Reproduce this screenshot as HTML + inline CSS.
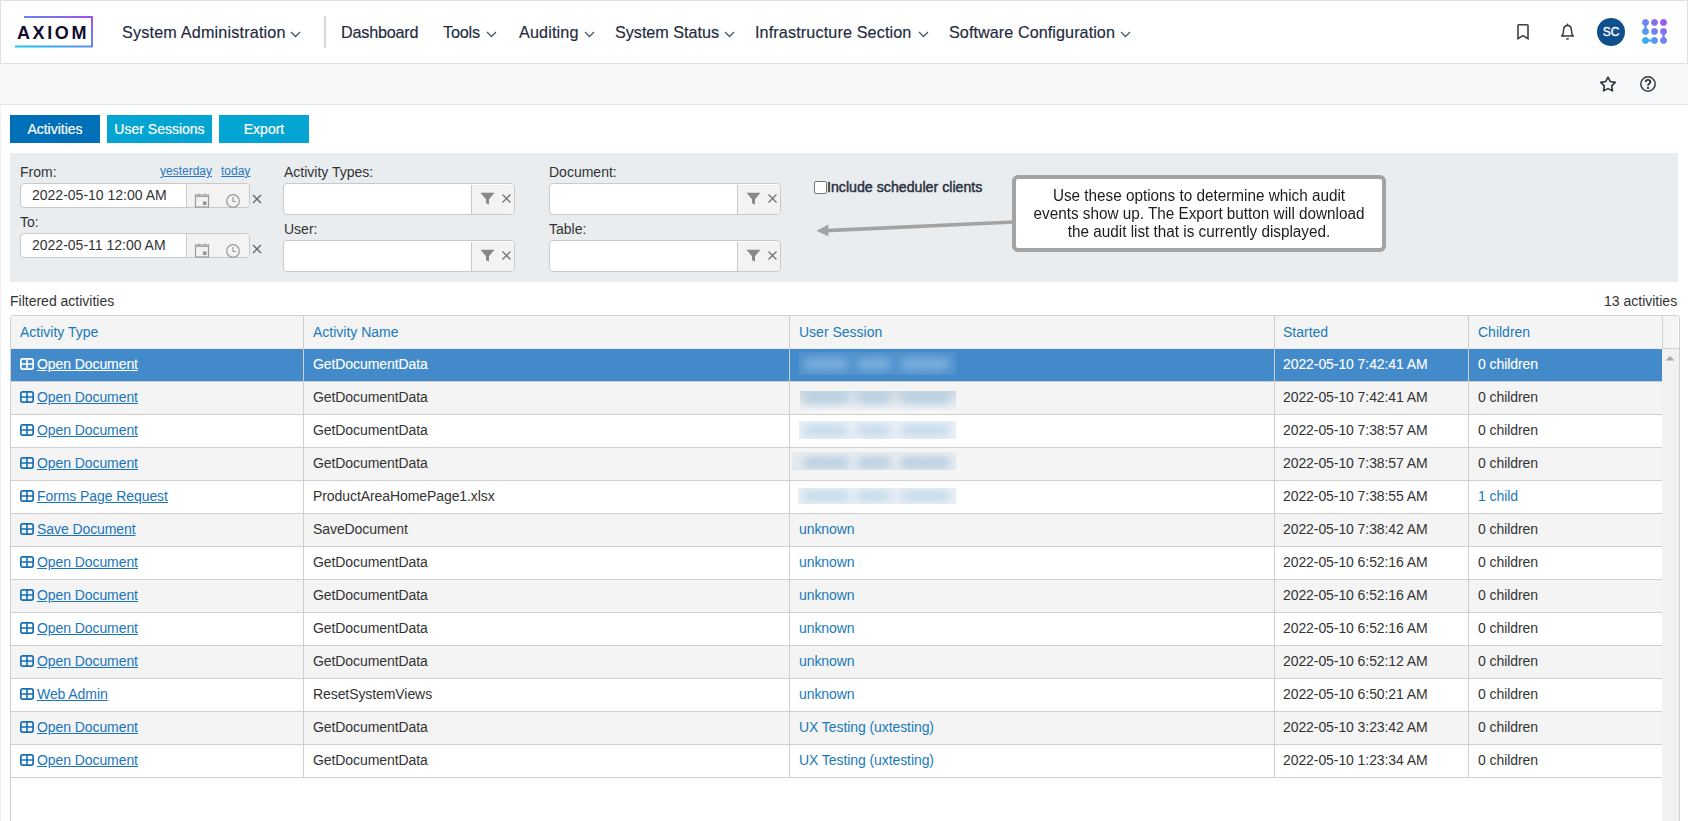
<!DOCTYPE html>
<html><head><meta charset="utf-8"><style>
*{box-sizing:border-box;margin:0;padding:0}
html,body{width:1688px;height:821px;overflow:hidden;background:#fff;font-family:"Liberation Sans",sans-serif;position:relative}
.abs{position:absolute}
#hdr{position:absolute;left:0;top:0;width:1688px;height:64px;background:#fff;border:1px solid #dde1e6;}
#sub{position:absolute;left:0;top:64px;width:1688px;height:41px;background:#f7f8fa;border-bottom:1px solid #e2e5e9}
.nav{position:absolute;top:22px;font-size:16.2px;line-height:20px;color:#232a3d;white-space:nowrap;-webkit-text-stroke:0.15px #232a3d}
.chev{position:absolute;top:31px}
.btn{position:absolute;top:115px;height:28px;color:#fff;font-size:14px;line-height:28px;text-align:center;-webkit-text-stroke:0.2px #fff}
#panel{position:absolute;left:10px;top:153px;width:1668px;height:129px;background:#e9edf0}
.lbl{position:absolute;font-size:14px;line-height:16px;color:#333;white-space:nowrap}
.inp{position:absolute;background:#fff;border:1px solid #c9c9c9;border-radius:4px;overflow:hidden}
.inp .btns{position:absolute;top:0;bottom:0;background:#f3f3f3;border-left:1px solid #c9c9c9}
.tx{position:absolute;font-size:14px;line-height:16px;color:#333;white-space:nowrap}
.bl{color:#1a7ab8}
.lnk{position:absolute;font-size:14px;line-height:16px;color:#1a75bb;text-decoration:underline;white-space:nowrap}
.row{position:absolute;left:11px;width:1651px;height:32px;background:#fff}
.row.alt{background:#f4f4f4}
.row.sel{background:#428ac9}
.row.sel ~ .tx, .row.sel ~ .lnk{}
.gi{position:absolute}
.vline{position:absolute;top:316px;width:1px;height:462px;background:#cfcfcf}
.hline{position:absolute;left:11px;width:1651px;height:1px;background:#cfcfcf}
.blur{position:absolute;overflow:hidden}
</style></head><body>
<div id="hdr"></div>
<!-- logo -->
<svg class="abs" style="left:0;top:0" width="100" height="64" viewBox="0 0 100 64">
<defs><linearGradient id="lg" x1="0" y1="1" x2="1" y2="0"><stop offset="0" stop-color="#22c0f0"/><stop offset="0.5" stop-color="#5b8cf0"/><stop offset="1" stop-color="#a64ff2"/></linearGradient></defs>
<path d="M24 17H92V46.5H15" fill="none" stroke="url(#lg)" stroke-width="2"/>
</svg>
<div class="abs" style="left:17px;top:23px;font-size:18px;line-height:20px;font-weight:700;color:#0f0c2e;letter-spacing:2.6px;white-space:nowrap">AXIOM</div>
<div class="nav" style="left:122px;letter-spacing:0.17px">System Administration</div>
<div class="abs" style="left:324px;top:16px;width:2px;height:32px;background:#d5dae0"></div>
<div class="nav" style="left:341px;letter-spacing:-0.21px">Dashboard</div>
<div class="nav" style="left:443px;letter-spacing:-0.17px">Tools</div>
<div class="nav" style="left:519px;letter-spacing:0.14px">Auditing</div>
<div class="nav" style="left:615px;letter-spacing:-0.03px">System Status</div>
<div class="nav" style="left:755px;letter-spacing:0.12px">Infrastructure Section</div>
<div class="nav" style="left:949px;letter-spacing:0.06px">Software Configuration</div>
<svg class="chev" style="left:290px" width="11" height="7" viewBox="0 0 11 7"><path d="M1 1L5.5 5.5L10 1" fill="none" stroke="#4a5468" stroke-width="1.3"/></svg><svg class="chev" style="left:486px" width="11" height="7" viewBox="0 0 11 7"><path d="M1 1L5.5 5.5L10 1" fill="none" stroke="#4a5468" stroke-width="1.3"/></svg><svg class="chev" style="left:584px" width="11" height="7" viewBox="0 0 11 7"><path d="M1 1L5.5 5.5L10 1" fill="none" stroke="#4a5468" stroke-width="1.3"/></svg><svg class="chev" style="left:724px" width="11" height="7" viewBox="0 0 11 7"><path d="M1 1L5.5 5.5L10 1" fill="none" stroke="#4a5468" stroke-width="1.3"/></svg><svg class="chev" style="left:918px" width="11" height="7" viewBox="0 0 11 7"><path d="M1 1L5.5 5.5L10 1" fill="none" stroke="#4a5468" stroke-width="1.3"/></svg><svg class="chev" style="left:1120px" width="11" height="7" viewBox="0 0 11 7"><path d="M1 1L5.5 5.5L10 1" fill="none" stroke="#4a5468" stroke-width="1.3"/></svg>

<svg class="abs" style="left:1515px;top:23px" width="16" height="19" viewBox="0 0 16 19"><path d="M3 2.6Q3 1.8 3.8 1.8H12.2Q13 1.8 13 2.6V15.6L8 12.6L3 15.6Z" fill="none" stroke="#3a4048" stroke-width="1.6" stroke-linejoin="miter"/></svg>
<svg class="abs" style="left:1559px;top:22px" width="17" height="20" viewBox="0 0 17 20"><path d="M8.5 3.6C5.9 3.6 4.7 5.6 4.5 8.2L4.2 11.4C4 12.6 3.4 13.2 2.6 14.1H14.4C13.6 13.2 13 12.6 12.8 11.4L12.5 8.2C12.3 5.6 11.1 3.6 8.5 3.6Z" fill="none" stroke="#33393f" stroke-width="1.5" stroke-linejoin="round"/><path d="M8.5 1.6V3.6" stroke="#33393f" stroke-width="1.4"/><path d="M6.9 16.3H10.1C9.8 17.4 9.2 17.8 8.5 17.8C7.8 17.8 7.2 17.4 6.9 16.3Z" fill="#33393f"/></svg>
<div class="abs" style="left:1597px;top:18px;width:28px;height:28px;border-radius:50%;background:#0f4f8c;color:#fff;font-size:12px;font-weight:400;-webkit-text-stroke:0.35px #fff;line-height:28px;text-align:center">SC</div>
<svg class="abs" style="left:1642px;top:19px" width="26" height="26" viewBox="0 0 26 26">
<defs><linearGradient id="dg" gradientUnits="userSpaceOnUse" x1="2" y1="24" x2="24" y2="2"><stop offset="0" stop-color="#30b6f4"/><stop offset="0.5" stop-color="#7184ee"/><stop offset="1" stop-color="#a64ff2"/></linearGradient></defs>
<g fill="url(#dg)" stroke="url(#dg)">
<circle cx="3.5" cy="3.5" r="3"/><circle cx="12.5" cy="3.5" r="3"/><circle cx="21.5" cy="3.5" r="3"/>
<circle cx="3.5" cy="12.5" r="3"/><circle cx="12.5" cy="12.5" r="3"/><circle cx="21.5" cy="12.5" r="3"/>
<circle cx="3.5" cy="21.5" r="3"/><circle cx="12.5" cy="21.5" r="3"/><circle cx="21.5" cy="21.5" r="3"/>
<path d="M3.5 3.5V12.5M3.5 21.5H12.5M21.5 12.5V21.5" stroke-width="2.2" fill="none"/>
</g></svg>

<div id="sub"></div>
<div class="abs" style="left:0;top:105px;width:1px;height:716px;background:#eef2f7"></div>

<svg class="abs" style="left:1599px;top:75px" width="18" height="18" viewBox="0 0 18 18"><path d="M9.00 2.10L11.29 6.54L16.23 7.35L12.71 10.91L13.47 15.85L9.00 13.60L4.53 15.85L5.29 10.91L1.77 7.35L6.71 6.54Z" fill="none" stroke="#2f353d" stroke-width="1.6" stroke-linejoin="round"/></svg>
<svg class="abs" style="left:1639px;top:75px" width="18" height="18" viewBox="0 0 18 18"><circle cx="9" cy="9" r="7.2" fill="none" stroke="#333a42" stroke-width="1.5"/><path d="M6.7 7.1C6.7 5.8 7.7 4.9 9 4.9C10.4 4.9 11.3 5.8 11.3 7C11.3 8.5 9 8.8 9 10.7" fill="none" stroke="#2f353d" stroke-width="1.9"/><circle cx="9" cy="13" r="1.15" fill="#2f353d"/></svg>

<div class="btn" style="left:10px;width:90px;background:#0070b8">Activities</div>
<div class="btn" style="left:107px;width:105px;background:#05a5d3">User Sessions</div>
<div class="btn" style="left:219px;width:90px;background:#05a5d3">Export</div>
<div id="panel"></div>
<div class="lbl" style="left:20px;top:164px">From:</div>
<div class="abs" style="left:160px;top:164px;font-size:12px;line-height:14px;color:#2a78c0;text-decoration:underline">yesterday</div>
<div class="abs" style="left:221px;top:164px;font-size:12px;line-height:14px;color:#2a78c0;text-decoration:underline">today</div>
<div class="lbl" style="left:20px;top:214px">To:</div>
<div class="inp" style="left:20px;top:183px;width:230px;height:25px"><div class="btns" style="left:165px;right:0"></div></div>
<div class="tx" style="left:32px;top:187px">2022-05-10 12:00 AM</div>
<svg class="abs" style="left:194px;top:192px" width="16" height="16" viewBox="0 0 16 16"><rect x="1.5" y="3" width="13" height="12" fill="none" stroke="#9a9a9a" stroke-width="1.2"/><path d="M1.5 4.5H14.5M5 1.5V4M11 1.5V4" stroke="#a0a0a0" stroke-width="1.1"/><rect x="9" y="9.5" width="3.5" height="3.5" fill="#909090"/></svg>
<svg class="abs" style="left:225px;top:193px" width="16" height="16" viewBox="0 0 16 16"><circle cx="8" cy="8" r="6.3" fill="none" stroke="#9a9a9a" stroke-width="1.2"/><path d="M8 4V8.5H11" fill="none" stroke="#9a9a9a" stroke-width="1.2"/></svg>
<svg class="abs" style="left:251px;top:193px" width="12" height="12" viewBox="0 0 12 12"><path d="M2 2L10 10M10 2L2 10" stroke="#6a6a6a" stroke-width="1.4"/></svg>
<div class="inp" style="left:20px;top:233px;width:230px;height:25px"><div class="btns" style="left:165px;right:0"></div></div>
<div class="tx" style="left:32px;top:237px">2022-05-11 12:00 AM</div>
<svg class="abs" style="left:194px;top:242px" width="16" height="16" viewBox="0 0 16 16"><rect x="1.5" y="3" width="13" height="12" fill="none" stroke="#9a9a9a" stroke-width="1.2"/><path d="M1.5 4.5H14.5M5 1.5V4M11 1.5V4" stroke="#a0a0a0" stroke-width="1.1"/><rect x="9" y="9.5" width="3.5" height="3.5" fill="#909090"/></svg>
<svg class="abs" style="left:225px;top:243px" width="16" height="16" viewBox="0 0 16 16"><circle cx="8" cy="8" r="6.3" fill="none" stroke="#9a9a9a" stroke-width="1.2"/><path d="M8 4V8.5H11" fill="none" stroke="#9a9a9a" stroke-width="1.2"/></svg>
<svg class="abs" style="left:251px;top:243px" width="12" height="12" viewBox="0 0 12 12"><path d="M2 2L10 10M10 2L2 10" stroke="#6a6a6a" stroke-width="1.4"/></svg>
<div class="lbl" style="left:284px;top:164px">Activity Types:</div>
<div class="lbl" style="left:284px;top:221px">User:</div>
<div class="lbl" style="left:549px;top:164px">Document:</div>
<div class="lbl" style="left:549px;top:221px">Table:</div>
<div class="inp" style="left:283px;top:183px;width:232px;height:32px"><div class="btns" style="left:187px;right:0;top:1px"></div></div>
<svg class="abs" style="left:480px;top:192px" width="15" height="13" viewBox="0 0 15 13"><path d="M0.5 0.8H14.5L9 7.2V12.6L6 11.2V7.2Z" fill="#888"/></svg>
<svg class="abs" style="left:501px;top:193px" width="11" height="11" viewBox="0 0 11 11"><path d="M1.5 1.5L9.5 9.5M9.5 1.5L1.5 9.5" stroke="#777" stroke-width="1.4"/></svg>
<div class="inp" style="left:283px;top:240px;width:232px;height:32px"><div class="btns" style="left:187px;right:0;top:1px"></div></div>
<svg class="abs" style="left:480px;top:249px" width="15" height="13" viewBox="0 0 15 13"><path d="M0.5 0.8H14.5L9 7.2V12.6L6 11.2V7.2Z" fill="#888"/></svg>
<svg class="abs" style="left:501px;top:250px" width="11" height="11" viewBox="0 0 11 11"><path d="M1.5 1.5L9.5 9.5M9.5 1.5L1.5 9.5" stroke="#777" stroke-width="1.4"/></svg>
<div class="inp" style="left:549px;top:183px;width:232px;height:32px"><div class="btns" style="left:187px;right:0;top:1px"></div></div>
<svg class="abs" style="left:746px;top:192px" width="15" height="13" viewBox="0 0 15 13"><path d="M0.5 0.8H14.5L9 7.2V12.6L6 11.2V7.2Z" fill="#888"/></svg>
<svg class="abs" style="left:767px;top:193px" width="11" height="11" viewBox="0 0 11 11"><path d="M1.5 1.5L9.5 9.5M9.5 1.5L1.5 9.5" stroke="#777" stroke-width="1.4"/></svg>
<div class="inp" style="left:549px;top:240px;width:232px;height:32px"><div class="btns" style="left:187px;right:0;top:1px"></div></div>
<svg class="abs" style="left:746px;top:249px" width="15" height="13" viewBox="0 0 15 13"><path d="M0.5 0.8H14.5L9 7.2V12.6L6 11.2V7.2Z" fill="#888"/></svg>
<svg class="abs" style="left:767px;top:250px" width="11" height="11" viewBox="0 0 11 11"><path d="M1.5 1.5L9.5 9.5M9.5 1.5L1.5 9.5" stroke="#777" stroke-width="1.4"/></svg>
<div class="abs" style="left:814px;top:181px;width:13px;height:13px;border:1px solid #767676;border-radius:2px;background:#fff"></div>
<div class="abs" style="left:827px;top:179px;font-size:14.2px;line-height:16px;font-weight:400;-webkit-text-stroke:0.45px #2b3040;color:#2b3040;white-space:nowrap">Include scheduler clients</div>
<div class="abs" style="left:1012px;top:175px;width:374px;height:77px;border:4px solid #a3a3a3;border-radius:6px;background:#fff"></div>
<div class="abs" style="left:1015px;top:187px;width:368px;text-align:center;font-size:16px;line-height:18px;color:#1c1c1c;transform:scaleX(0.955);transform-origin:50% 0">Use these options to determine which audit<br>events show up. The Export button will download<br>the audit list that is currently displayed.</div>
<svg class="abs" style="left:810px;top:210px" width="210" height="30" viewBox="0 0 210 30"><path d="M204 12L16 20.6" stroke="#a3a3a3" stroke-width="3.6"/><path d="M6.3 20.8L18.3 14.4V26.2Z" fill="#a3a3a3"/></svg>
<div class="tx" style="left:10px;top:293px">Filtered activities</div>
<div class="tx" style="left:1604px;top:293px">13 activities</div>
<!-- table -->
<div class="abs" style="left:10px;top:315px;width:1670px;height:520px;border:1px solid #cfcfcf;border-radius:3px 3px 0 0;background:#fff"></div>
<div class="abs" style="left:11px;top:316px;width:1667px;height:33px;background:#f4f4f4;border-bottom:1px solid #ededed"></div>
<div class="abs" style="left:1662px;top:349px;width:17px;height:480px;background:#f1f1f1"></div>
<div class="tx bl" style="left:20px;top:324px">Activity Type</div>
<div class="tx bl" style="left:313px;top:324px">Activity Name</div>
<div class="tx bl" style="left:799px;top:324px">User Session</div>
<div class="tx bl" style="left:1283px;top:324px">Started</div>
<div class="tx bl" style="left:1478px;top:324px">Children</div>
<div class="row sel" style="top:349px"></div><svg class="gi" style="left:20px;top:358px" width="14" height="12" viewBox="0 0 14 12"><rect x="0.85" y="0.85" width="12.3" height="10.3" rx="1.8" fill="none" stroke="#ffffff" stroke-width="1.7"/><path d="M7 1V11M1 6H13" stroke="#ffffff" stroke-width="1.6"/></svg><a class="lnk" style="left:37px;top:356px;color:#fff;-webkit-text-stroke:0.12px #fff;letter-spacing:-0.08px;">Open Document</a><span class="tx" style="left:313px;top:356px;color:#fff;-webkit-text-stroke:0.12px #fff;letter-spacing:-0.08px;">GetDocumentData</span><div class="blur" style="left:799px;top:352px;width:157px;height:23px;background:#4f91cd"><i style="position:absolute;left:4px;top:6.0px;width:46px;height:12px;background:#85b5e2;border-radius:6px;filter:blur(4px);opacity:0.85"></i><i style="position:absolute;left:58px;top:6.0px;width:34px;height:12px;background:#85b5e2;border-radius:6px;filter:blur(4px);opacity:0.85"></i><i style="position:absolute;left:101px;top:6.0px;width:50px;height:12px;background:#85b5e2;border-radius:6px;filter:blur(4px);opacity:0.85"></i></div><span class="tx" style="left:1283px;top:356px;color:#fff;-webkit-text-stroke:0.12px #fff;letter-spacing:-0.08px;">2022-05-10 7:42:41 AM</span><span class="tx" style="left:1478px;top:356px;color:#fff;-webkit-text-stroke:0.12px #fff;letter-spacing:-0.08px;">0 children</span>
<div class="row alt" style="top:382px"></div><svg class="gi" style="left:20px;top:391px" width="14" height="12" viewBox="0 0 14 12"><rect x="0.85" y="0.85" width="12.3" height="10.3" rx="1.8" fill="none" stroke="#1770b5" stroke-width="1.7"/><path d="M7 1V11M1 6H13" stroke="#1770b5" stroke-width="1.6"/></svg><a class="lnk" style="left:37px;top:389px;letter-spacing:-0.08px;">Open Document</a><span class="tx" style="left:313px;top:389px;letter-spacing:-0.08px;">GetDocumentData</span><div class="blur" style="left:800px;top:391px;width:156px;height:19px;background:linear-gradient(#cddbe6,#eef1f3)"><i style="position:absolute;left:3px;top:0.5px;width:46px;height:11px;background:#adc8dd;border-radius:6px;filter:blur(4px);opacity:0.8"></i><i style="position:absolute;left:57px;top:0.5px;width:34px;height:11px;background:#adc8dd;border-radius:6px;filter:blur(4px);opacity:0.8"></i><i style="position:absolute;left:100px;top:0.5px;width:50px;height:11px;background:#adc8dd;border-radius:6px;filter:blur(4px);opacity:0.8"></i></div><span class="tx" style="left:1283px;top:389px;letter-spacing:-0.08px;">2022-05-10 7:42:41 AM</span><span class="tx" style="left:1478px;top:389px;letter-spacing:-0.08px;">0 children</span>
<div class="row" style="top:415px"></div><svg class="gi" style="left:20px;top:424px" width="14" height="12" viewBox="0 0 14 12"><rect x="0.85" y="0.85" width="12.3" height="10.3" rx="1.8" fill="none" stroke="#1770b5" stroke-width="1.7"/><path d="M7 1V11M1 6H13" stroke="#1770b5" stroke-width="1.6"/></svg><a class="lnk" style="left:37px;top:422px;letter-spacing:-0.08px;">Open Document</a><span class="tx" style="left:313px;top:422px;letter-spacing:-0.08px;">GetDocumentData</span><div class="blur" style="left:799px;top:421px;width:157px;height:18px;background:#e9f0f6"><i style="position:absolute;left:4px;top:3.5px;width:46px;height:11px;background:#b9d2e6;border-radius:6px;filter:blur(4px);opacity:0.75"></i><i style="position:absolute;left:58px;top:3.5px;width:34px;height:11px;background:#b9d2e6;border-radius:6px;filter:blur(4px);opacity:0.75"></i><i style="position:absolute;left:101px;top:3.5px;width:50px;height:11px;background:#b9d2e6;border-radius:6px;filter:blur(4px);opacity:0.75"></i></div><span class="tx" style="left:1283px;top:422px;letter-spacing:-0.08px;">2022-05-10 7:38:57 AM</span><span class="tx" style="left:1478px;top:422px;letter-spacing:-0.08px;">0 children</span>
<div class="row alt" style="top:448px"></div><svg class="gi" style="left:20px;top:457px" width="14" height="12" viewBox="0 0 14 12"><rect x="0.85" y="0.85" width="12.3" height="10.3" rx="1.8" fill="none" stroke="#1770b5" stroke-width="1.7"/><path d="M7 1V11M1 6H13" stroke="#1770b5" stroke-width="1.6"/></svg><a class="lnk" style="left:37px;top:455px;letter-spacing:-0.08px;">Open Document</a><span class="tx" style="left:313px;top:455px;letter-spacing:-0.08px;">GetDocumentData</span><div class="blur" style="left:792px;top:452px;width:164px;height:18px;background:linear-gradient(#e9edf0,#e3eaef)"><i style="position:absolute;left:11px;top:4.5px;width:46px;height:11px;background:#adc8dd;border-radius:6px;filter:blur(4px);opacity:0.85"></i><i style="position:absolute;left:65px;top:4.5px;width:34px;height:11px;background:#adc8dd;border-radius:6px;filter:blur(4px);opacity:0.85"></i><i style="position:absolute;left:108px;top:4.5px;width:50px;height:11px;background:#adc8dd;border-radius:6px;filter:blur(4px);opacity:0.85"></i></div><span class="tx" style="left:1283px;top:455px;letter-spacing:-0.08px;">2022-05-10 7:38:57 AM</span><span class="tx" style="left:1478px;top:455px;letter-spacing:-0.08px;">0 children</span>
<div class="row" style="top:481px"></div><svg class="gi" style="left:20px;top:490px" width="14" height="12" viewBox="0 0 14 12"><rect x="0.85" y="0.85" width="12.3" height="10.3" rx="1.8" fill="none" stroke="#1770b5" stroke-width="1.7"/><path d="M7 1V11M1 6H13" stroke="#1770b5" stroke-width="1.6"/></svg><a class="lnk" style="left:37px;top:488px;letter-spacing:-0.08px;">Forms Page Request</a><span class="tx" style="left:313px;top:488px;letter-spacing:-0.08px;">ProductAreaHomePage1.xlsx</span><div class="blur" style="left:798px;top:488px;width:158px;height:16px;background:#e7eff6"><i style="position:absolute;left:5px;top:3.0px;width:46px;height:10px;background:#b9d2e6;border-radius:6px;filter:blur(4px);opacity:0.75"></i><i style="position:absolute;left:59px;top:3.0px;width:34px;height:10px;background:#b9d2e6;border-radius:6px;filter:blur(4px);opacity:0.75"></i><i style="position:absolute;left:102px;top:3.0px;width:50px;height:10px;background:#b9d2e6;border-radius:6px;filter:blur(4px);opacity:0.75"></i></div><span class="tx" style="left:1283px;top:488px;letter-spacing:-0.08px;">2022-05-10 7:38:55 AM</span><span class="tx bl" style="left:1478px;top:488px;letter-spacing:-0.08px;">1 child</span>
<div class="row alt" style="top:514px"></div><svg class="gi" style="left:20px;top:523px" width="14" height="12" viewBox="0 0 14 12"><rect x="0.85" y="0.85" width="12.3" height="10.3" rx="1.8" fill="none" stroke="#1770b5" stroke-width="1.7"/><path d="M7 1V11M1 6H13" stroke="#1770b5" stroke-width="1.6"/></svg><a class="lnk" style="left:37px;top:521px;letter-spacing:-0.08px;">Save Document</a><span class="tx" style="left:313px;top:521px;letter-spacing:-0.08px;">SaveDocument</span><span class="tx bl" style="left:799px;top:521px;letter-spacing:-0.08px;">unknown</span><span class="tx" style="left:1283px;top:521px;letter-spacing:-0.08px;">2022-05-10 7:38:42 AM</span><span class="tx" style="left:1478px;top:521px;letter-spacing:-0.08px;">0 children</span>
<div class="row" style="top:547px"></div><svg class="gi" style="left:20px;top:556px" width="14" height="12" viewBox="0 0 14 12"><rect x="0.85" y="0.85" width="12.3" height="10.3" rx="1.8" fill="none" stroke="#1770b5" stroke-width="1.7"/><path d="M7 1V11M1 6H13" stroke="#1770b5" stroke-width="1.6"/></svg><a class="lnk" style="left:37px;top:554px;letter-spacing:-0.08px;">Open Document</a><span class="tx" style="left:313px;top:554px;letter-spacing:-0.08px;">GetDocumentData</span><span class="tx bl" style="left:799px;top:554px;letter-spacing:-0.08px;">unknown</span><span class="tx" style="left:1283px;top:554px;letter-spacing:-0.08px;">2022-05-10 6:52:16 AM</span><span class="tx" style="left:1478px;top:554px;letter-spacing:-0.08px;">0 children</span>
<div class="row alt" style="top:580px"></div><svg class="gi" style="left:20px;top:589px" width="14" height="12" viewBox="0 0 14 12"><rect x="0.85" y="0.85" width="12.3" height="10.3" rx="1.8" fill="none" stroke="#1770b5" stroke-width="1.7"/><path d="M7 1V11M1 6H13" stroke="#1770b5" stroke-width="1.6"/></svg><a class="lnk" style="left:37px;top:587px;letter-spacing:-0.08px;">Open Document</a><span class="tx" style="left:313px;top:587px;letter-spacing:-0.08px;">GetDocumentData</span><span class="tx bl" style="left:799px;top:587px;letter-spacing:-0.08px;">unknown</span><span class="tx" style="left:1283px;top:587px;letter-spacing:-0.08px;">2022-05-10 6:52:16 AM</span><span class="tx" style="left:1478px;top:587px;letter-spacing:-0.08px;">0 children</span>
<div class="row" style="top:613px"></div><svg class="gi" style="left:20px;top:622px" width="14" height="12" viewBox="0 0 14 12"><rect x="0.85" y="0.85" width="12.3" height="10.3" rx="1.8" fill="none" stroke="#1770b5" stroke-width="1.7"/><path d="M7 1V11M1 6H13" stroke="#1770b5" stroke-width="1.6"/></svg><a class="lnk" style="left:37px;top:620px;letter-spacing:-0.08px;">Open Document</a><span class="tx" style="left:313px;top:620px;letter-spacing:-0.08px;">GetDocumentData</span><span class="tx bl" style="left:799px;top:620px;letter-spacing:-0.08px;">unknown</span><span class="tx" style="left:1283px;top:620px;letter-spacing:-0.08px;">2022-05-10 6:52:16 AM</span><span class="tx" style="left:1478px;top:620px;letter-spacing:-0.08px;">0 children</span>
<div class="row alt" style="top:646px"></div><svg class="gi" style="left:20px;top:655px" width="14" height="12" viewBox="0 0 14 12"><rect x="0.85" y="0.85" width="12.3" height="10.3" rx="1.8" fill="none" stroke="#1770b5" stroke-width="1.7"/><path d="M7 1V11M1 6H13" stroke="#1770b5" stroke-width="1.6"/></svg><a class="lnk" style="left:37px;top:653px;letter-spacing:-0.08px;">Open Document</a><span class="tx" style="left:313px;top:653px;letter-spacing:-0.08px;">GetDocumentData</span><span class="tx bl" style="left:799px;top:653px;letter-spacing:-0.08px;">unknown</span><span class="tx" style="left:1283px;top:653px;letter-spacing:-0.08px;">2022-05-10 6:52:12 AM</span><span class="tx" style="left:1478px;top:653px;letter-spacing:-0.08px;">0 children</span>
<div class="row" style="top:679px"></div><svg class="gi" style="left:20px;top:688px" width="14" height="12" viewBox="0 0 14 12"><rect x="0.85" y="0.85" width="12.3" height="10.3" rx="1.8" fill="none" stroke="#1770b5" stroke-width="1.7"/><path d="M7 1V11M1 6H13" stroke="#1770b5" stroke-width="1.6"/></svg><a class="lnk" style="left:37px;top:686px;letter-spacing:-0.08px;">Web Admin</a><span class="tx" style="left:313px;top:686px;letter-spacing:-0.08px;">ResetSystemViews</span><span class="tx bl" style="left:799px;top:686px;letter-spacing:-0.08px;">unknown</span><span class="tx" style="left:1283px;top:686px;letter-spacing:-0.08px;">2022-05-10 6:50:21 AM</span><span class="tx" style="left:1478px;top:686px;letter-spacing:-0.08px;">0 children</span>
<div class="row alt" style="top:712px"></div><svg class="gi" style="left:20px;top:721px" width="14" height="12" viewBox="0 0 14 12"><rect x="0.85" y="0.85" width="12.3" height="10.3" rx="1.8" fill="none" stroke="#1770b5" stroke-width="1.7"/><path d="M7 1V11M1 6H13" stroke="#1770b5" stroke-width="1.6"/></svg><a class="lnk" style="left:37px;top:719px;letter-spacing:-0.08px;">Open Document</a><span class="tx" style="left:313px;top:719px;letter-spacing:-0.08px;">GetDocumentData</span><span class="tx bl" style="left:799px;top:719px;letter-spacing:-0.08px;">UX Testing (uxtesting)</span><span class="tx" style="left:1283px;top:719px;letter-spacing:-0.08px;">2022-05-10 3:23:42 AM</span><span class="tx" style="left:1478px;top:719px;letter-spacing:-0.08px;">0 children</span>
<div class="row" style="top:745px"></div><svg class="gi" style="left:20px;top:754px" width="14" height="12" viewBox="0 0 14 12"><rect x="0.85" y="0.85" width="12.3" height="10.3" rx="1.8" fill="none" stroke="#1770b5" stroke-width="1.7"/><path d="M7 1V11M1 6H13" stroke="#1770b5" stroke-width="1.6"/></svg><a class="lnk" style="left:37px;top:752px;letter-spacing:-0.08px;">Open Document</a><span class="tx" style="left:313px;top:752px;letter-spacing:-0.08px;">GetDocumentData</span><span class="tx bl" style="left:799px;top:752px;letter-spacing:-0.08px;">UX Testing (uxtesting)</span><span class="tx" style="left:1283px;top:752px;letter-spacing:-0.08px;">2022-05-10 1:23:34 AM</span><span class="tx" style="left:1478px;top:752px;letter-spacing:-0.08px;">0 children</span>
<div class="hline" style="top:381px"></div><div class="hline" style="top:414px"></div><div class="hline" style="top:447px"></div><div class="hline" style="top:480px"></div><div class="hline" style="top:513px"></div><div class="hline" style="top:546px"></div><div class="hline" style="top:579px"></div><div class="hline" style="top:612px"></div><div class="hline" style="top:645px"></div><div class="hline" style="top:678px"></div><div class="hline" style="top:711px"></div><div class="hline" style="top:744px"></div><div class="hline" style="top:777px"></div>
<svg class="abs" style="left:1664px;top:354px" width="12" height="8" viewBox="0 0 12 8"><path d="M1.5 6.5L6 2L10.5 6.5Z" fill="#a8a8a8"/></svg>
<div class="vline" style="left:303px"></div><div class="vline" style="left:789px"></div><div class="vline" style="left:1274px"></div><div class="vline" style="left:1468px"></div>
<div class="abs" style="left:1662px;top:316px;width:1px;height:32px;background:#d2d2d2"></div>
<div class="abs" style="left:1662px;top:348px;width:17px;height:1px;background:#d2d2d2"></div>
</body></html>
